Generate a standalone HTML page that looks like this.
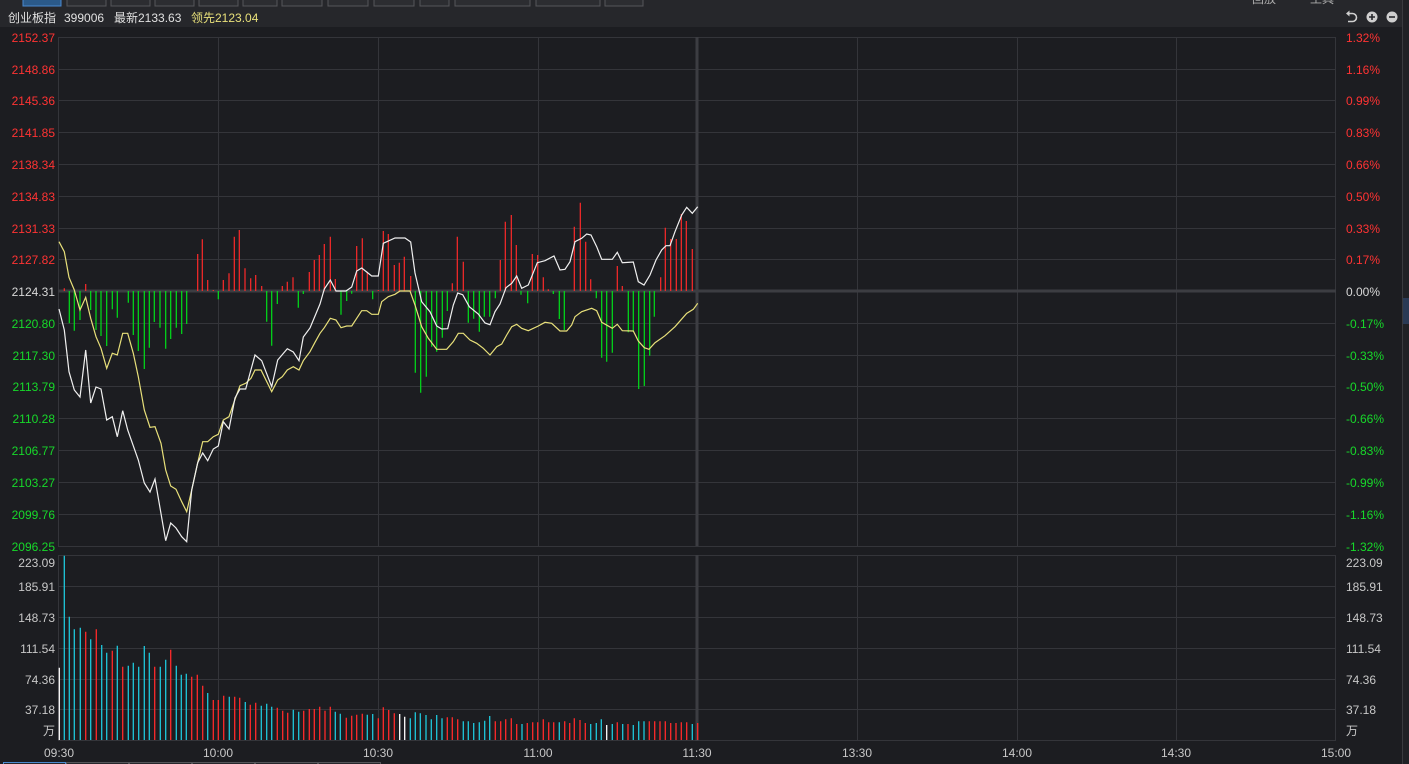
<!DOCTYPE html>
<html><head><meta charset="utf-8"><style>
html,body{margin:0;padding:0;background:#1c1d21;width:1409px;height:764px;overflow:hidden}
svg{display:block}
text{font-family:"Liberation Sans","Noto Sans CJK SC",sans-serif;font-size:12px}
</style></head><body>
<svg width="1409" height="764" viewBox="0 0 1409 764" xmlns="http://www.w3.org/2000/svg">
<rect width="1409" height="764" fill="#1c1d21"/>
<rect x="0" y="0" width="1409" height="7" fill="#26272b"/>
<g fill="#2c2d31" stroke="#55565a" stroke-width="1">
<rect x="23" y="-6" width="38" height="12" fill="#2b5a8a" stroke="#4a8ad0"/>
<rect x="67" y="-6" width="39" height="12"/><rect x="111" y="-6" width="39" height="12"/>
<rect x="155" y="-6" width="39" height="12"/><rect x="199" y="-6" width="39" height="12"/>
<rect x="243" y="-6" width="34" height="12"/><rect x="282" y="-6" width="40" height="12"/>
<rect x="328" y="-6" width="40" height="12"/><rect x="374" y="-6" width="40" height="12"/>
<rect x="420" y="-6" width="29" height="12"/><rect x="455" y="-6" width="75" height="12"/>
<rect x="536" y="-6" width="64" height="12"/><rect x="605" y="-6" width="38" height="12"/>
</g>
<text x="1252" y="3" fill="#aaa" font-size="10">回放</text><text x="1310" y="3" fill="#aaa" font-size="10">工具</text>
<rect x="0" y="7" width="1403" height="20" fill="#26272b"/>
<text x="8" y="22" fill="#e0e0e0">创业板指</text>
<text x="64" y="22" fill="#e0e0e0">399006</text>
<text x="114" y="22" fill="#e0e0e0">最新2133.63</text>
<text x="191" y="22" fill="#e8e07a">领先2123.04</text>
<path d="M1348 13.5H1352.5A3.8 3.8 0 0 1 1352.5 21.5H1348" fill="none" stroke="#cfcfcf" stroke-width="1.6"/>
<path d="M1346 13.5L1349.5 10.5V16.5Z" fill="#cfcfcf"/>
<circle cx="1372" cy="17" r="5.5" fill="#cfcfcf"/><path d="M1369 17h6M1372 14v6" stroke="#26272b" stroke-width="1.6"/>
<circle cx="1392" cy="17" r="5.5" fill="#cfcfcf"/><path d="M1389 17h6" stroke="#26272b" stroke-width="1.6"/>
<rect x="1403" y="0" width="6" height="764" fill="#202125"/>
<line x1="1402.5" y1="0" x2="1402.5" y2="764" stroke="#3a3b3f"/>
<rect x="1403" y="298" width="6" height="26" fill="#2a3a55"/>
<g stroke="#34353a" stroke-width="1">
<path d="M58 37.5H1336M58 69.5H1336M58 100.5H1336M58 132.5H1336M58 164.5H1336M58 196.5H1336M58 228.5H1336M58 259.5H1336M58 323.5H1336M58 355.5H1336M58 386.5H1336M58 418.5H1336M58 450.5H1336M58 482.5H1336M58 514.5H1336M58 546.5H1336"/>
<path d="M58.5 37V546M218.5 37V546M378.5 37V546M538.5 37V546M857.5 37V546M1017.5 37V546M1176.5 37V546M1335.5 37V546"/>
<path d="M58 555.5H1336M58 586.5H1336M58 617.5H1336M58 648.5H1336M58 679.5H1336M58 709.5H1336M58 740.5H1336"/>
<path d="M58.5 555V741M218.5 555V741M378.5 555V741M538.5 555V741M857.5 555V741M1017.5 555V741M1176.5 555V741M1335.5 555V741"/>
</g>
<path d="M58 291H1336" stroke="#3c3d42" stroke-width="3"/>
<path d="M697 37V546M697 555V741" stroke="#3c3d42" stroke-width="3"/>
<path fill="none" stroke="#ff2a2a" stroke-width="1.2" d="M64.3 291V288.3M85.7 291V284M197.7 291V254M202.3 291V239.3M207.7 291V280M213.3 291V290M223.3 291V280M229 291V273.3M234.3 291V236.7M239.3 291V230M245 291V268.3M250.7 291V278.3M255.7 291V275M261.7 291V286M282.3 291V286M287.3 291V281.7M293 291V277.3M309.3 291V272M314.3 291V260M319.3 291V255M324.3 291V244M330.3 291V236.7M335.3 291V279M356.7 291V246M362.3 291V238.3M367.3 291V271.7M378.3 291V290M383.3 291V231M388.3 291V234M394.3 291V265M399.3 291V262.7M404.3 291V256.7M410.7 291V276M452.3 291V283.3M457.3 291V236.7M463.3 291V261.7M500.3 291V260M505.3 291V221.7M511.3 291V215M516.3 291V245M532.3 291V254M537.7 291V255M543.3 291V277.3M548.3 291V289.3M574.3 291V226.7M580.3 291V202.7M585.7 291V241.7M590.7 291V279.3M617.3 291V266M622.3 291V286M660.7 291V277.3M665.3 291V227.7M670.7 291V239M676.3 291V239M681.3 291V214M686.3 291V221M692.3 291V249"/>
<path fill="none" stroke="#00e01a" stroke-width="1.2" d="M69.3 291V323.3M74.3 291V330.7M80 291V320M90.7 291V310M96 291V330M101 291V336M106.7 291V346M112.3 291V309.3M117.3 291V317.7M128.3 291V302.7M133.3 291V335M138.3 291V351M144.3 291V369M149.3 291V347.7M154.3 291V322M160 291V327.7M165.7 291V348.7M170.7 291V339M176.3 291V327.7M181.7 291V334M186.7 291V324M218.3 291V299.3M266.7 291V321.7M271.7 291V345.7M277.3 291V304M298.3 291V307.7M303.3 291V294M341 291V314.7M346.7 291V301M351.7 291V293.7M372.7 291V299.3M415.3 291V372.7M420.7 291V392.7M426.3 291V376.7M431.7 291V346.7M436.7 291V351.7M442.3 291V337.7M447.3 291V311M468.3 291V322.7M473.7 291V318.7M479.3 291V331.7M484.3 291V316.7M489.7 291V316.7M495.3 291V298.3M521 291V294.7M527.7 291V303.3M553.3 291V294M559.3 291V319M564.3 291V330M596.3 291V298.3M601.7 291V357.7M606.7 291V361.7M612.3 291V352.7M628.3 291V332.3M633.3 291V331.7M638.7 291V389M644.3 291V386M649.7 291V355.7M654.3 291V316.7"/>
<polyline fill="none" stroke="#e8e07a" stroke-width="1.2" points="59,241.7 64.3,251.7 69,277.3 74.3,290 80,310 85.7,297.3 90.7,318.3 96,336.7 101,348.3 106.7,368.3 112.3,353.3 117.3,355 122.7,333.3 127.7,333.3 133.3,353.3 138.3,376.7 144.3,410 150,427.3 155,426.7 161,443.3 165.7,470 170.7,486 176,489.3 181.7,501.7 186.7,511.7 191.7,490 197.7,462.7 202.7,441.7 207.7,441.7 213.3,436.7 218.3,434.3 223.3,420 229,416.7 235,399.3 240,385.7 245.7,383.3 251,378.3 255,370 261,370 271.7,391.7 277.7,380 282.3,376.7 287.3,370 293.3,366.7 299,370 303.3,360.7 310,351.7 315,342.3 320,333.3 324.3,327.7 330.3,318.3 336,320 341,327.7 346.7,326 351.7,326 356.7,318.3 361.7,310.7 366.7,310.7 371.7,314.3 378.3,314.3 381.7,301.7 388.3,296.7 395,294.3 400,291 410,291 415,305 421.7,326.7 428.3,338.3 436.7,349.3 446.7,349.3 453.3,341.7 458.3,333.3 463.3,333.3 470,340 476.7,343.3 483.3,348.3 490,355 496.7,346.7 501.7,344 506.7,335 511.7,326.7 516.7,324.3 521.7,328.3 528.3,330.7 538.3,326 545,322.3 551.7,323.3 560,331 566.7,331 571.7,325 575,316.7 581.7,311.7 591.7,308.3 596.7,310.7 601.7,322.3 612.3,328.3 617.3,324.3 622.3,330.7 633.3,331 638.3,341 644.3,347.7 649,349.3 655,342.7 665,335.7 675,326.7 686.7,313.3 693.3,309.3 697.7,303.3"/>
<polyline fill="none" stroke="#f0f0f0" stroke-width="1.2" points="59,309 64.3,330 69,371.7 74.3,390 80,397 85.7,350 90.7,403 96,387 101,389 106.7,420 112.3,416.7 117.3,436.7 122.7,410.7 127.7,430 138.3,460 144.3,483 150,492 155,479 165.7,540.7 170.7,523 176,528 181.7,536.7 186.7,541.7 191.7,490 197.7,462.7 202.7,453 207.7,460.7 213.3,449 218.3,446 223.3,421.7 229,429 235,398 240,389 245.7,389 255,355 261.7,360.7 271.7,386.7 277.7,360 287.3,348.7 293.3,352 299,360.7 303.3,337 310,328 315,316 320,304 324.3,289 330.3,280 336,291 346,291 351.7,287 356.7,271 361.7,268 371.7,276 378.3,276 383.3,243.3 395,238 405,238 410.7,242 415,273 421.7,301.7 430,311.7 436.7,326 441.7,329 447.7,328.7 453.3,305 457.7,293 462.7,294.7 469.3,306.7 478.3,314 485,323 490,324.7 495,311.7 500,304 506,287.7 511.7,283.3 516.7,276 521.7,288.3 528.3,285 537.3,262.7 545,260.7 554,256 560,270 565,269.3 570,261.7 575,241.7 581.7,238.3 586.7,234 591,235 596.7,246.7 601.7,259.3 612.3,259.3 617.3,252.3 622.3,262.7 633.3,262 638.3,281.7 644,285 650,275 656,260 661.7,250 666,245.7 670,245.7 675,231.7 681.7,215 686.7,207.3 692.3,213.3 697.7,206.7"/>
<path fill="none" stroke="#ffffff" stroke-width="1.3" d="M59.3 740V667.7M399.7 740V714M404.7 740V716.7M606.7 740V725"/>
<path fill="none" stroke="#1ec8dc" stroke-width="1.3" d="M64.3 740V555.7M69.3 740V616.7M74.3 740V629.3M80.3 740V627.7M90.7 740V639.3M101.7 740V645M106.7 740V652.7M117.3 740V645.7M128.3 740V665.7M133.3 740V662.7M138.7 740V666.7M144.3 740V646M149.3 740V652.7M160.3 740V666.7M165.7 740V659.7M176.3 740V665.7M181.3 740V674.7M186.3 740V673.7M207.7 740V693M229.3 740V696.7M245.3 740V702M261.3 740V705.7M266.7 740V703.7M271.7 740V706.7M293.3 740V709.7M298.7 740V711.7M335.3 740V711.7M340.3 740V713.7M367.3 740V714.7M372.7 740V714M410.3 740V718.3M415.3 740V712.3M420.3 740V713.3M426 740V715M431.3 740V719.3M436.7 740V715M442 740V718.3M463.3 740V721.3M468.3 740V721.3M473.7 740V723M479.3 740V722.3M484.7 740V720.7M489.7 740V716M522 740V724M559.3 740V722.3M590.7 740V724M596.3 740V723M601.3 740V719.3M612.3 740V724M622.7 740V724M633.3 740V725M638.7 740V721.3M644 740V721.3M692.3 740V724"/>
<path fill="none" stroke="#ff2a2a" stroke-width="1.3" d="M85.7 740V631.7M96.3 740V629.3M112.3 740V650.7M122.7 740V666.7M154.7 740V666.7M170.7 740V649.7M191.7 740V676.7M197.3 740V674.7M202.7 740V685.7M213.3 740V700M218.3 740V700M223.7 740V695.7M234.7 740V696.7M239.7 740V697.7M250.3 740V704.7M255.7 740V702.7M277.3 740V707.7M282.7 740V710.7M287.7 740V712.7M303.7 740V710.7M309.3 740V709M314.3 740V709M319.7 740V706.7M325 740V710.7M330.3 740V706.7M346.3 740V717.7M351.7 740V715.7M356.7 740V714.7M362.3 740V713.7M378.3 740V718.3M383.3 740V707.3M388.7 740V710M394.3 740V713.3M447.3 740V717.3M452.3 740V717.3M457.7 740V719.3M495.3 740V721.3M500.7 740V721.3M505.7 740V719.3M511.3 740V718.3M516.7 740V724M527.3 740V723M532.7 740V722.3M537.7 740V722.3M543.3 740V719.3M548.7 740V722.3M553.7 740V722.3M564.7 740V721.3M569.7 740V723M574.3 740V718.3M580 740V720M585.3 740V723M617.3 740V722.3M628 740V724M649.3 740V721.3M654.7 740V721.3M660 740V721.3M665.3 740V721.3M670.7 740V723M676 740V723M681.3 740V722.3M686.7 740V722.3M697.7 740V723"/>
<g text-anchor="end">
<g fill="#ff3333">
<text x="55" y="42">2152.37</text><text x="55" y="74">2148.86</text><text x="55" y="105">2145.36</text><text x="55" y="137">2141.85</text><text x="55" y="169">2138.34</text><text x="55" y="201">2134.83</text><text x="55" y="233">2131.33</text><text x="55" y="264">2127.82</text>
</g>
<text x="55" y="296" fill="#d8d8d8">2124.31</text>
<g fill="#17d92a">
<text x="55" y="328">2120.80</text><text x="55" y="360">2117.30</text><text x="55" y="391">2113.79</text><text x="55" y="423">2110.28</text><text x="55" y="455">2106.77</text><text x="55" y="487">2103.27</text><text x="55" y="519">2099.76</text><text x="55" y="551">2096.25</text>
</g>
<g fill="#c8c8c8">
<text x="55" y="567">223.09</text><text x="55" y="591">185.91</text><text x="55" y="622">148.73</text><text x="55" y="653">111.54</text><text x="55" y="684">74.36</text><text x="55" y="714">37.18</text><text x="55" y="735">万</text>
</g>
</g>
<g text-anchor="start">
<g fill="#ff3333">
<text x="1346" y="42">1.32%</text><text x="1346" y="74">1.16%</text><text x="1346" y="105">0.99%</text><text x="1346" y="137">0.83%</text><text x="1346" y="169">0.66%</text><text x="1346" y="201">0.50%</text><text x="1346" y="233">0.33%</text><text x="1346" y="264">0.17%</text>
</g>
<text x="1346" y="296" fill="#d8d8d8">0.00%</text>
<g fill="#17d92a">
<text x="1346" y="328">-0.17%</text><text x="1346" y="360">-0.33%</text><text x="1346" y="391">-0.50%</text><text x="1346" y="423">-0.66%</text><text x="1346" y="455">-0.83%</text><text x="1346" y="487">-0.99%</text><text x="1346" y="519">-1.16%</text><text x="1346" y="551">-1.32%</text>
</g>
<g fill="#c8c8c8">
<text x="1346" y="567">223.09</text><text x="1346" y="591">185.91</text><text x="1346" y="622">148.73</text><text x="1346" y="653">111.54</text><text x="1346" y="684">74.36</text><text x="1346" y="714">37.18</text><text x="1346" y="735">万</text>
</g>
</g>
<g fill="#c8c8c8" text-anchor="middle">
<text x="59" y="757">09:30</text><text x="218" y="757">10:00</text><text x="378" y="757">10:30</text><text x="538" y="757">11:00</text><text x="697" y="757">11:30</text><text x="857" y="757">13:30</text><text x="1017" y="757">14:00</text><text x="1176" y="757">14:30</text><text x="1336" y="757">15:00</text>
</g>
<g fill="#26272b" stroke="#55565a">
<rect x="3.5" y="762.5" width="62" height="8" stroke="#4a8ad0"/><rect x="66.5" y="762.5" width="62" height="8"/><rect x="129.5" y="762.5" width="62" height="8"/><rect x="192.5" y="762.5" width="62" height="8"/><rect x="255.5" y="762.5" width="62" height="8"/><rect x="318.5" y="762.5" width="62" height="8"/>
</g>
</svg>
</body></html>
